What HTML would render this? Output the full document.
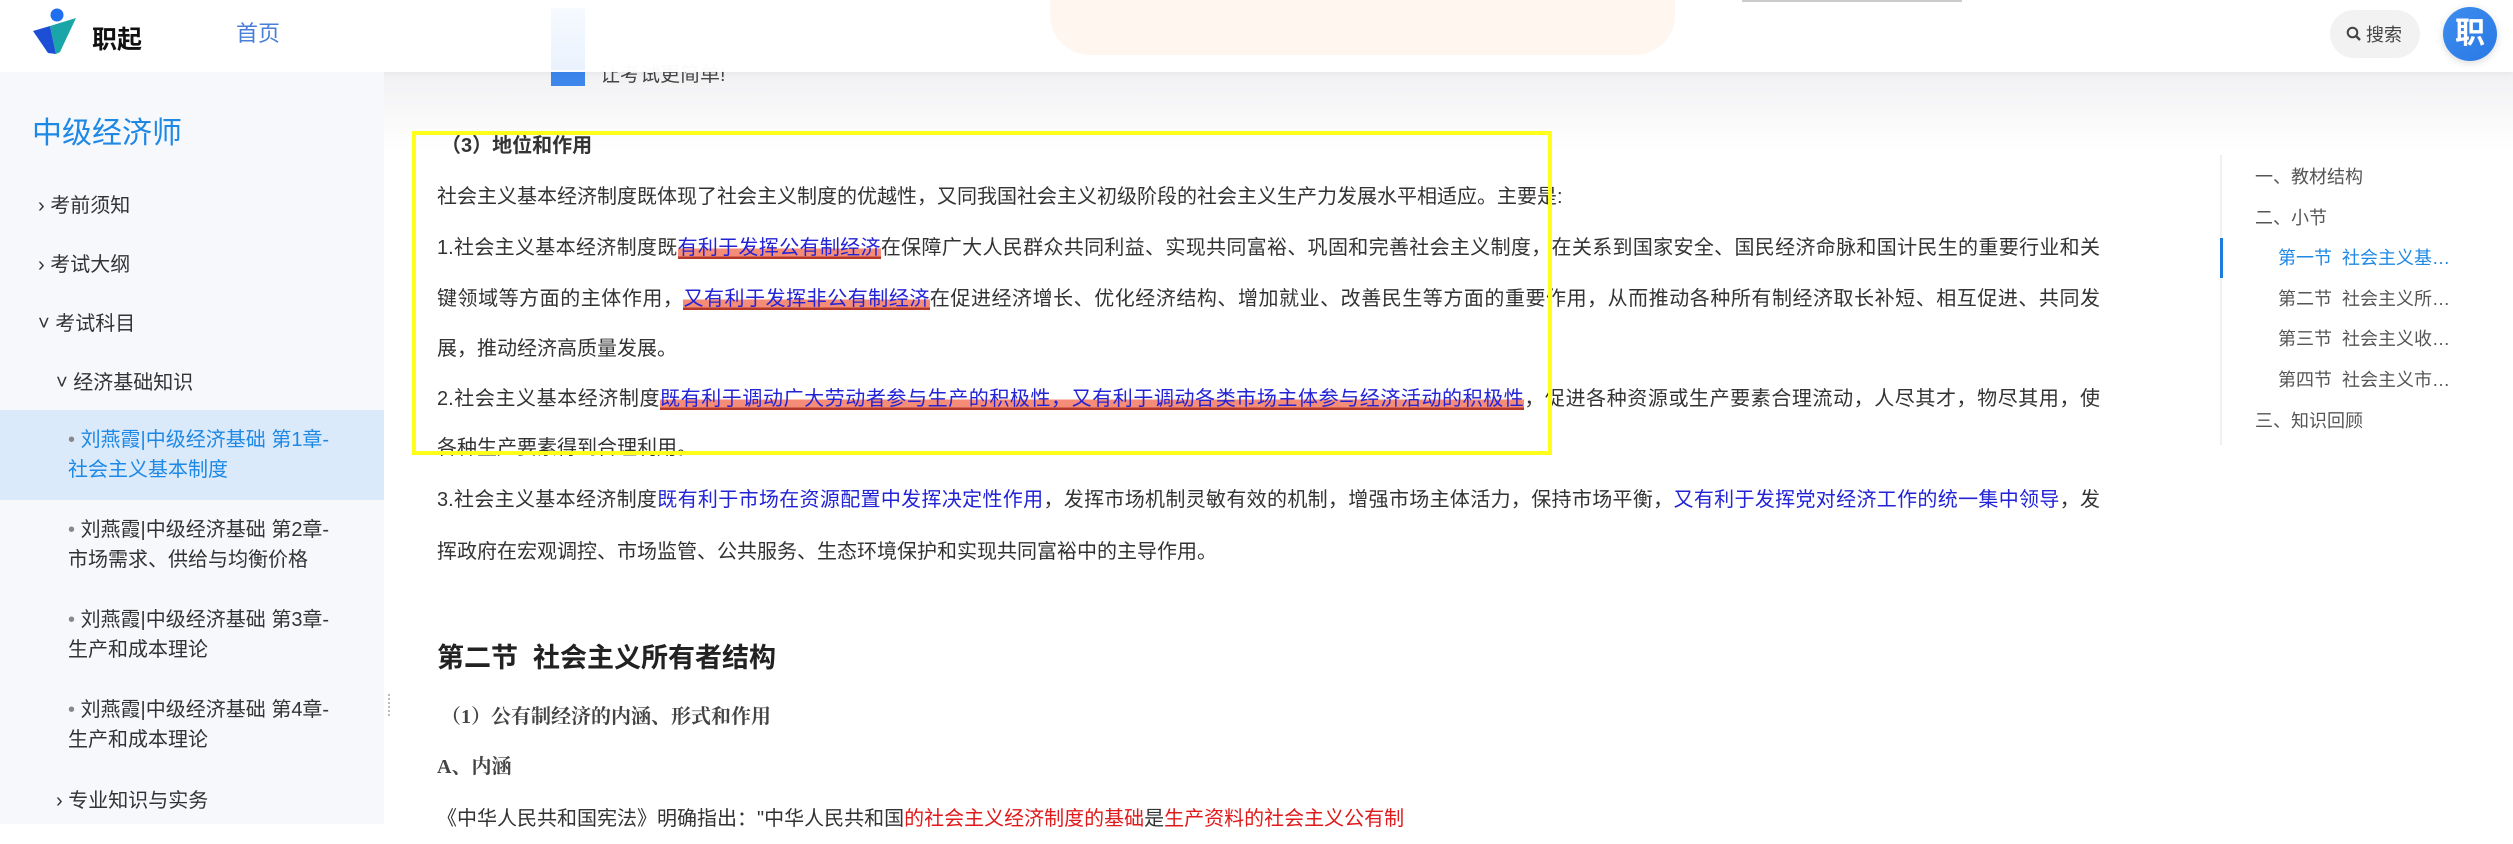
<!DOCTYPE html>
<html><head><meta charset="utf-8"><style>
*{margin:0;padding:0;box-sizing:border-box}
body{width:2513px;height:824px;overflow:hidden;background:#fff;position:relative;font-family:"Liberation Sans","Noto Sans CJK SC",sans-serif;color:#333}
.abs{position:absolute}
#side{left:0;top:72px;width:384px;height:752px;background:#f6f8fc}
.mi{position:absolute;font-size:20px;color:#333;white-space:nowrap}
.ln{position:absolute;left:437px;width:1663px;font-size:20px;line-height:50px;height:50px;white-space:nowrap;color:#333}
.j{text-align:justify;text-align-last:justify}
.hl{color:#2323d6;background:linear-gradient(to bottom,transparent 52%,#f48c78 52%,#f48c78 88%,#b33a2a 88%)}
.bl{color:#2323d6}
.rd{color:#e0191b}
.toc{position:absolute;left:2255px;font-size:18px;color:#555;white-space:nowrap}
.serif{font-family:"Liberation Serif","Noto Serif CJK SC",serif}
</style></head><body>
<div class="abs" style="left:384px;top:72px;width:2129px;height:80px;background:linear-gradient(#f1f1f3,#fff)"></div>
<div class="abs" style="left:551px;top:70px;width:34px;height:16px;background:#3c86ec"></div>
<div class="abs" style="left:600px;top:58px;font-size:20px;color:#444">让考试更简单!</div>

<div class="abs" style="left:0;top:0;width:2513px;height:72px;background:rgba(255,255,255,0.97);box-shadow:0 2px 6px rgba(0,0,0,0.04)"></div>
<div class="abs" style="left:551px;top:8px;width:34px;height:62px;background:linear-gradient(#f6faff,#eaf2fd)"></div>
<div class="abs" style="left:1050px;top:0;width:625px;height:55px;background:#fff4ec;border-radius:0 0 40px 40px;opacity:.8"></div>
<div class="abs" style="left:1742px;top:0;width:220px;height:2px;background:#ccc"></div>
<svg class="abs" style="left:30px;top:6px" width="50" height="50" viewBox="0 0 50 50">
<circle cx="27" cy="9" r="6.5" fill="#1f6ff0"/>
<path d="M3 25 L20 20 L26 48 L18 47 Z" fill="#1d4fd6"/>
<path d="M20 20 L46 12 L30 46 L26 48 Z" fill="#1aa6a8"/>
</svg>
<div class="abs" style="left:92px;top:20px;font-size:25px;font-weight:bold;color:#111">职起</div>
<div class="abs" style="left:236px;top:16px;font-size:22px;color:#4a7fd8">首页</div>
<div class="abs" style="left:2330px;top:10px;width:90px;height:48px;border-radius:24px;background:#f2f2f2"></div>
<svg class="abs" style="left:2346px;top:26px" width="16" height="16" viewBox="0 0 16 16"><circle cx="6.5" cy="6.5" r="4.8" fill="none" stroke="#444" stroke-width="2"/><path d="M10 10 L14 14" stroke="#444" stroke-width="2.4"/></svg>
<div class="abs" style="left:2366px;top:21px;font-size:18px;color:#444">搜索</div>
<div class="abs" style="left:2443px;top:7px;width:54px;height:54px;border-radius:50%;background:linear-gradient(135deg,#3d8df0,#2a78e4);color:#fff;font-size:30px;font-weight:bold;text-align:center;line-height:54px;box-shadow:0 2px 8px rgba(0,0,0,.15)">职</div>

<div id="side" class="abs"></div>
<div class="abs" style="left:32px;top:108px;font-size:30px;color:#1e88e5">中级经济师</div>
<div class="mi" style="left:38px;top:189px">› 考前须知</div>
<div class="mi" style="left:38px;top:248px">› 考试大纲</div>
<div class="mi" style="left:38px;top:307px">˅ 考试科目</div>
<div class="mi" style="left:56px;top:366px">˅ 经济基础知识</div>
<div class="abs" style="left:0;top:410px;width:384px;height:90px;background:#dbeafb"></div>
<div class="mi" style="left:68px;top:425px;color:#1e88e5;line-height:30px"><span style="color:#888">• </span>刘燕霞|中级经济基础 第1章-<br>社会主义基本制度</div>
<div class="mi" style="left:68px;top:515px;line-height:30px"><span style="color:#888">• </span>刘燕霞|中级经济基础 第2章-<br>市场需求、供给与均衡价格</div>
<div class="mi" style="left:68px;top:605px;line-height:30px"><span style="color:#888">• </span>刘燕霞|中级经济基础 第3章-<br>生产和成本理论</div>
<div class="mi" style="left:68px;top:695px;line-height:30px"><span style="color:#888">• </span>刘燕霞|中级经济基础 第4章-<br>生产和成本理论</div>
<div class="mi" style="left:56px;top:784px">› 专业知识与实务</div>
<div class="abs" style="left:388px;top:694px;width:2px;height:22px;border-left:2px dotted #bbb"></div>

<div class="ln" style="top:121px;font-weight:bold;left:441px">（3）地位和作用</div>
<div class="ln" style="top:172px">社会主义基本经济制度既体现了社会主义制度的优越性，又同我国社会主义初级阶段的社会主义生产力发展水平相适应。主要是:</div>
<div class="ln j" style="top:223px">1.社会主义基本经济制度既<span class="hl">有利于发挥公有制经济</span>在保障广大人民群众共同利益、实现共同富裕、巩固和完善社会主义制度，在关系到国家安全、国民经济命脉和国计民生的重要行业和关</div>
<div class="ln j" style="top:274px">键领域等方面的主体作用，<span class="hl">又有利于发挥非公有制经济</span>在促进经济增长、优化经济结构、增加就业、改善民生等方面的重要作用，从而推动各种所有制经济取长补短、相互促进、共同发</div>
<div class="ln" style="top:324px">展，推动经济高质量发展。</div>
<div class="ln j" style="top:374px">2.社会主义基本经济制度<span class="hl">既有利于调动广大劳动者参与生产的积极性，又有利于调动各类市场主体参与经济活动的积极性</span>，促进各种资源或生产要素合理流动，人尽其才，物尽其用，使</div>
<div class="ln" style="top:423px">各种生产要素得到合理利用。</div>
<div class="ln j" style="top:475px">3.社会主义基本经济制度<span class="bl">既有利于市场在资源配置中发挥决定性作用</span>，发挥市场机制灵敏有效的机制，增强市场主体活力，保持市场平衡，<span class="bl">又有利于发挥党对经济工作的统一集中领导</span>，发</div>
<div class="ln" style="top:527px">挥政府在宏观调控、市场监管、公共服务、生态环境保护和实现共同富裕中的主导作用。</div>
<div class="ln" style="top:633px;font-size:27px;font-weight:bold;color:#222">第二节&nbsp; 社会主义所有者结构</div>
<div class="ln serif" style="top:692px;left:441px;font-weight:bold;color:#444">（1）公有制经济的内涵、形式和作用</div>
<div class="ln serif" style="top:742px;font-weight:bold;color:#444">A、内涵</div>
<div class="ln" style="top:794px">《中华人民共和国宪法》明确指出："中华人民共和国<span class="rd">的社会主义经济制度的基础</span>是<span class="rd">生产资料的社会主义公有制</span></div>

<div class="abs" style="left:412px;top:131px;width:1140px;height:324px;border:4px solid #ffff1a"></div>

<div class="abs" style="left:2220px;top:155px;width:2px;height:290px;background:#f0f0f0"></div>
<div class="abs" style="left:2220px;top:238px;width:3px;height:40px;background:#1e7be0"></div>
<div class="toc" style="top:163px">一、教材结构</div>
<div class="toc" style="top:204px">二、小节</div>
<div class="toc" style="top:244px;left:2278px;color:#1e88e5">第一节&nbsp; 社会主义基…</div>
<div class="toc" style="top:285px;left:2278px">第二节&nbsp; 社会主义所…</div>
<div class="toc" style="top:325px;left:2278px">第三节&nbsp; 社会主义收…</div>
<div class="toc" style="top:366px;left:2278px">第四节&nbsp; 社会主义市…</div>
<div class="toc" style="top:407px">三、知识回顾</div>
</body></html>
